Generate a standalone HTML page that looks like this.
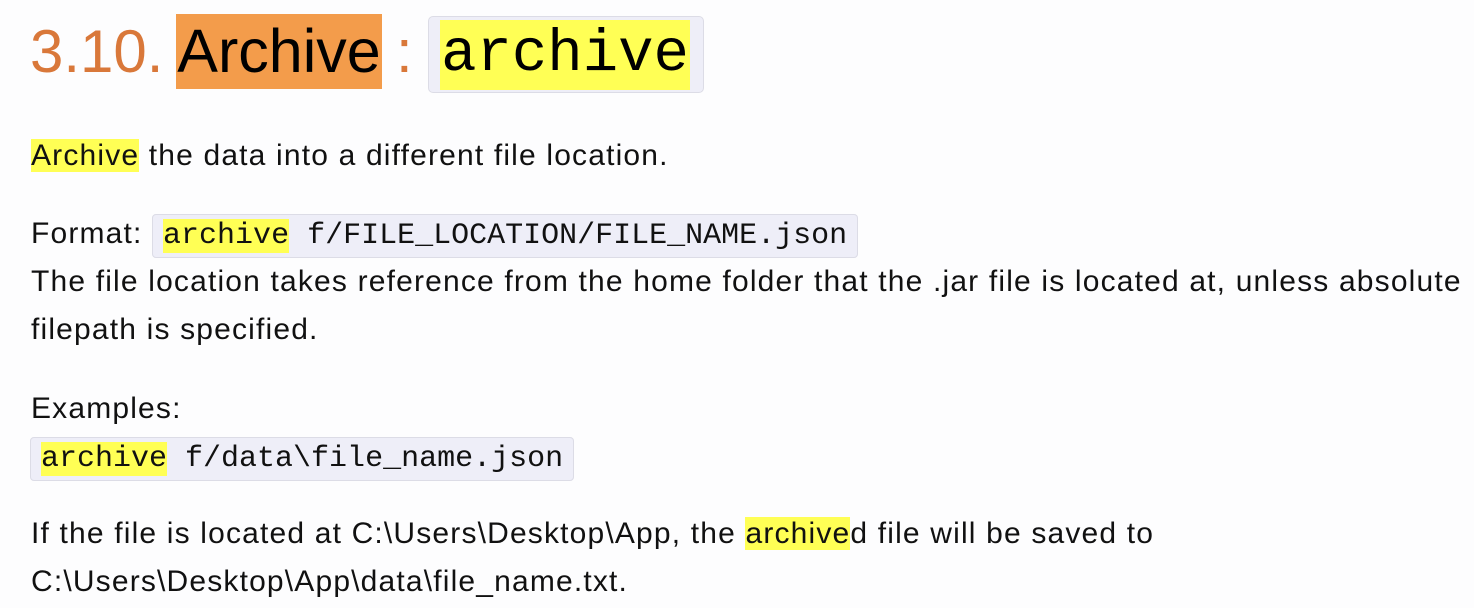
<!DOCTYPE html>
<html><head><meta charset="utf-8"><style>
body{margin:0;width:1474px;height:608px;background:#fdfdfe;font-family:"Liberation Sans",sans-serif;color:#111;overflow:hidden;position:relative}
.l{position:absolute;left:31px;font-size:30px;letter-spacing:1.17px;white-space:nowrap;line-height:34px}
.hl{background:#ffff55}
code{font-family:"Liberation Mono",monospace;background:#eeeef8;border:1px solid #dcdce6;border-radius:4px;padding:4px 10px;font-size:30px;letter-spacing:0}
</style></head><body>
<div style="position:absolute;left:30px;top:14px;font-size:60px;line-height:75px;color:#d9783a;white-space:nowrap">3.10.</div>
<div style="position:absolute;left:176px;top:14px;width:206px;height:75px;background:#f39c4b;color:#000;font-size:61px;line-height:75px;text-align:center">Archive</div>
<div style="position:absolute;left:396px;top:14px;font-size:60px;line-height:75px;color:#d9783a">:</div>
<div style="position:absolute;left:428px;top:16px;width:274px;height:75px;background:#eeeef8;border:1px solid #dcdce6;border-radius:5px"></div>
<div style="position:absolute;left:440px;top:20px;width:250px;height:70px;background:#ffff55;font-family:'Liberation Mono',monospace;font-size:59px;line-height:70px;color:#000;text-align:center">archive</div>
<div class="l" style="top:139px"><span class="hl">Archive</span> the data into a different file location.</div>
<div class="l" style="top:217px">Format: <code><span class="hl">archive</span> f/FILE_LOCATION/FILE_NAME.json</code></div>
<div class="l" style="top:265px">The file location takes reference from the home folder that the .jar file is located at, unless absolute</div>
<div class="l" style="top:313px">filepath is specified.</div>
<div class="l" style="top:392px">Examples:</div>
<div class="l" style="top:440px;left:30px"><code><span class="hl">archive</span> f/data\file_name.json</code></div>
<div class="l" style="top:517px">If the file is located at C:\Users\Desktop\App, the <span class="hl">archive</span>d file will be saved to</div>
<div class="l" style="top:565px">C:\Users\Desktop\App\data\file_name.txt.</div>
</body></html>
